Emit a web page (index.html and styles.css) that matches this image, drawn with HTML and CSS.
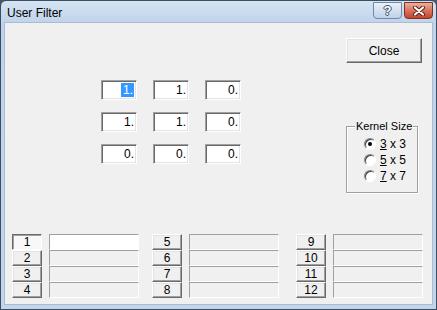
FILE: index.html
```html
<!DOCTYPE html>
<html lang="en">
<head>
    <meta charset="UTF-8">
    <title>User Filter</title>
    <link rel="stylesheet" href="styles.css">
</head>
<body>
    <div class="window">
        <div class="titlebar">
            <span class="title">User Filter</span>
            <div class="caption-btns">
                <span class="cap help">?</span>
                <span class="cap shut">
                    <svg width="14" height="10" viewBox="0 0 14 10">
                        <path d="M3 1.5 L11 8.5 M11 1.5 L3 8.5" stroke="#5a1a10" stroke-width="4" stroke-linecap="round"/>
                        <path d="M3 1.5 L11 8.5 M11 1.5 L3 8.5" stroke="#fff" stroke-width="2.2" stroke-linecap="round"/>
                    </svg>
                </span>
            </div>
        </div>

        <div class="client">
            <div class="top">
                <div class="matrix">
                    <div class="cell"><span class="sel">1.</span></div>
                    <div class="cell">1.</div>
                    <div class="cell">0.</div>
                    <div class="cell">1.</div>
                    <div class="cell">1.</div>
                    <div class="cell">0.</div>
                    <div class="cell">0.</div>
                    <div class="cell">0.</div>
                    <div class="cell">0.</div>
                </div>

                <div class="side">
                    <button class="btn close-btn">Close</button>
                    <fieldset class="group">
                        <legend>Kernel Size</legend>
                        <div class="radio-row"><span class="radio checked"></span><u>3</u>&nbsp;x 3</div>
                        <div class="radio-row"><span class="radio"></span><u>5</u>&nbsp;x 5</div>
                        <div class="radio-row"><span class="radio"></span><u>7</u>&nbsp;x 7</div>
                    </fieldset>
                </div>
            </div>

            <div class="bank">
                <div class="bank-col">
                    <button class="num pressed">1</button><div class="slot active"></div>
                    <button class="num">2</button><div class="slot"></div>
                    <button class="num">3</button><div class="slot"></div>
                    <button class="num">4</button><div class="slot"></div>
                </div>
                <div class="bank-col">
                    <button class="num">5</button><div class="slot"></div>
                    <button class="num">6</button><div class="slot"></div>
                    <button class="num">7</button><div class="slot"></div>
                    <button class="num">8</button><div class="slot"></div>
                </div>
                <div class="bank-col">
                    <button class="num">9</button><div class="slot"></div>
                    <button class="num">10</button><div class="slot"></div>
                    <button class="num">11</button><div class="slot"></div>
                    <button class="num">12</button><div class="slot"></div>
                </div>
            </div>
        </div>
    </div>
</body>
</html>
```

FILE: styles.css
```css
*{
    margin: 0;
    padding: 0;
    box-sizing: border-box;
}
body{
    background-color: #4b5664;
    font-family: "Liberation Sans", Arial, sans-serif;
    font-size: 11px;
    color: #000;
}
.window{
    width: 437px;
    height: 310px;
    display: flex;
    flex-direction: column;
    padding: 0 3px 4px 3px;
    border: 1px solid #3b4d63;
    border-radius: 6px 6px 0 0;
    background: linear-gradient(#d6e4f3, #bfd3ea 22px, #c2d5ea);
}
.titlebar{
    height: 21px;
    display: flex;
    justify-content: space-between;
    align-items: flex-start;
}
.title{
    font-size: 12px;
    padding: 5px 0 0 3px;
}
.caption-btns{
    display: flex;
    gap: 2px;
    margin-top: 1px;
}
.cap{
    width: 29px;
    height: 17px;
    border-radius: 0 0 4px 4px;
    display: flex;
    justify-content: center;
    align-items: center;
}
.help{
    border: 1px solid #7088a6;
    background: linear-gradient(#eaf1f9, #d3e1f1 50%, #bfd2e9);
    color: #fff;
    font-weight: bold;
    font-size: 13px;
    text-shadow: 1px 0 #39506d, -1px 0 #39506d, 0 1px #39506d, 0 -1px #39506d;
}
.shut{
    border: 1px solid #7b3326;
    background: linear-gradient(#eab0a0, #d9735c 50%, #c4442c);
}
.client{
    flex: 1;
    display: flex;
    flex-direction: column;
    background-color: #f0f0f0;
    border: 1px solid #a9bcd2;
}
.top{
    display: flex;
}
.matrix{
    display: grid;
    grid-template-columns: repeat(3, 36px);
    grid-auto-rows: 20px;
    column-gap: 16px;
    row-gap: 12px;
    margin: 57px 0 0 96px;
}
.cell{
    background-color: #fff;
    border: 1px solid;
    border-color: #a0a0a0 #fff #fff #a0a0a0;
    box-shadow: inset 1px 1px 0 #696969, inset -1px -1px 0 #e3e3e3;
    text-align: right;
    padding: 2px 2px 0 0;
    font-size: 12px;
    line-height: 14px;
}
.sel{
    background-color: #3399ff;
    color: #fff;
    padding: 0 1px 0 2px;
    display: inline-block;
}
.side{
    margin: 15px 10px 0 auto;
    display: flex;
    flex-direction: column;
    align-items: flex-start;
}
.btn, .num{
    font-family: "Liberation Sans", Arial, sans-serif;
    font-size: 11px;
    background-color: #f0f0f0;
    border: 1px solid;
    border-color: #fff #696969 #696969 #fff;
    box-shadow: inset -1px -1px 0 #a0a0a0, inset 1px 1px 0 #e3e3e3;
    color: #000;
}
.close-btn{
    width: 76px;
    height: 25px;
    font-size: 12px;
}
.group{
    width: 72px;
    margin-top: 57px;
    border: 1px solid #a0a0a0;
    box-shadow: 1px 1px 0 #fff, inset 1px 1px 0 #fff;
    padding: 3px 0 8px 17px;
    font-size: 12px;
}
.group legend{
    margin-left: -9px;
    padding: 0 1px;
    background-color: #f0f0f0;
    font-size: 11px;
    line-height: 13px;
    white-space: nowrap;
}
.radio-row{
    height: 16px;
    display: flex;
    align-items: center;
}
.radio{
    width: 12px;
    height: 12px;
    border-radius: 50%;
    margin-right: 4px;
    background-color: #fff;
    border: 1px solid;
    border-color: #808080 #fff #fff #808080;
    box-shadow: inset 1px 1px 0 #404040;
    display: flex;
    justify-content: center;
    align-items: center;
}
.radio.checked::after{
    content: "";
    width: 4px;
    height: 4px;
    border-radius: 50%;
    background-color: #000;
}
.bank{
    margin-top: auto;
    padding: 0 0 6px 7px;
    display: grid;
    grid-template-columns: 140px 144px auto;
}
.bank-col{
    display: grid;
    grid-template-columns: 30px 90px;
    grid-auto-rows: 16px;
    column-gap: 7px;
}
.num{
    font-size: 12px;
    line-height: 14px;
}
.num.pressed{
    background-color: #f8f8f8;
    border-color: #696969 #fff #fff #696969;
    box-shadow: inset 1px 1px 0 #a0a0a0;
}
.slot{
    border: 1px solid;
    border-color: #a0a0a0 #fff #fff #a0a0a0;
    background-color: #f0f0f0;
}
.slot.active{
    background-color: #fff;
}
```
